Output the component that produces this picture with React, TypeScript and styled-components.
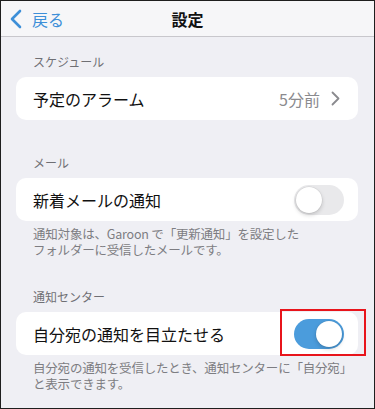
import React from "react";
import styled, { createGlobalStyle } from "styled-components";

const Global = createGlobalStyle`
  html, body { margin: 0; padding: 0; background: #ffffff; }
  * { box-sizing: border-box; }
`;

const FONT = `"Noto Sans CJK JP", "Noto Sans", "Liberation Sans", sans-serif`;

const Screen = styled.div`
  width: 375px;
  height: 409px;
  border: 1px solid #1e1e1e;
  background: #efeff4;
  font-family: ${FONT};
  overflow: hidden;
  display: flex;
  flex-direction: column;
`;

const NavBar = styled.header`
  height: 36px;
  flex: none;
  background: #f6f6f8;
  border-bottom: 1px solid #c8c7cc;
  display: grid;
  grid-template-columns: 1fr auto 1fr;
  align-items: center;
  padding: 0 8px;
`;

const BackButton = styled.div`
  display: flex;
  align-items: center;
  gap: 10px;
  color: #3d8fd8;
  font-size: 16px;
  line-height: 20px;
  padding-left: 1px;
`;

const Title = styled.div`
  font-size: 16px;
  font-weight: 700;
  color: #111;
  line-height: 20px;
  padding-top: 1px;
`;

const Content = styled.main`
  padding: 0 16px 0 15px;
  display: flex;
  flex-direction: column;
`;

const Section = styled.section<{ $top: number }>`
  margin-top: ${(p) => p.$top}px;
  display: flex;
  flex-direction: column;
`;

const SectionHeader = styled.div`
  font-size: 12px;
  line-height: 16px;
  color: #6f6f74;
  padding-left: 17px;
  margin-bottom: 7px;
`;

const Card = styled.div`
  position: relative;
  height: 43px;
  background: #ffffff;
  border-radius: 10px;
  display: flex;
  align-items: center;
  padding: 0 14px 0 17px;
`;

const RowLabel = styled.div`
  flex: 1;
  font-size: 16px;
  line-height: 20px;
  color: #111;
`;

const RowValue = styled.div`
  display: flex;
  align-items: center;
  gap: 11px;
  color: #8a8a8e;
  font-size: 16px;
  line-height: 20px;
  padding-right: 4px;
`;

const Footer = styled.div`
  font-size: 12.5px;
  letter-spacing: -0.2px;
  line-height: 16px;
  color: #7d7d82;
  padding: 5px 0 0 17px;
  white-space: nowrap;
`;

const FooterLine = styled.div`
  height: 16px;
`;

const Switch = styled.div<{ $on: boolean }>`
  position: relative;
  width: 50px;
  height: 30px;
  border-radius: 15px;
  background: ${(p) => (p.$on ? "#4b9cdc" : "#e9e9eb")};
  flex: none;
`;

const Knob = styled.div<{ $on: boolean }>`
  position: absolute;
  top: 2px;
  left: ${(p) => (p.$on ? "22px" : "2px")};
  width: 26px;
  height: 26px;
  border-radius: 50%;
  background: #ffffff;
  box-shadow: 0 2px 4px rgba(0, 0, 0, 0.18), 0 0 0 0.5px rgba(0, 0, 0, 0.08);
`;

const Highlight = styled.div`
  position: absolute;
  left: 264px;
  top: -3px;
  width: 86px;
  height: 47px;
  border: 2px solid #e8141b;
  pointer-events: none;
`;

const Toggle = ({ on }: { on: boolean }) => (
  <Switch $on={on}>
    <Knob $on={on} />
  </Switch>
);

export default function App() {
  return (
    <>
      <Global />
      <Screen>
        <NavBar>
          <BackButton>
            <svg width="12" height="20" viewBox="0 0 12 20">
              <polyline
                points="10,2 2,10 10,18"
                fill="none"
                stroke="#3d8fd8"
                strokeWidth="2.6"
                strokeLinecap="round"
                strokeLinejoin="round"
              />
            </svg>
            戻る
          </BackButton>
          <Title>設定</Title>
          <div />
        </NavBar>
        <Content>
          <Section $top={17}>
            <SectionHeader>スケジュール</SectionHeader>
            <Card>
              <RowLabel>予定のアラーム</RowLabel>
              <RowValue>
                5分前
                <svg width="9" height="15" viewBox="0 0 9 15">
                  <polyline
                    points="1.5,1.5 7.5,7.5 1.5,13.5"
                    fill="none"
                    stroke="#8a8a8e"
                    strokeWidth="1.8"
                    strokeLinecap="round"
                    strokeLinejoin="round"
                  />
                </svg>
              </RowValue>
            </Card>
          </Section>
          <Section $top={35}>
            <SectionHeader>メール</SectionHeader>
            <Card>
              <RowLabel>新着メールの通知</RowLabel>
              <Toggle on={false} />
            </Card>
            <Footer>
              <FooterLine>通知対象は、Garoon で「更新通知」を設定した</FooterLine>
              <FooterLine>フォルダーに受信したメールです。</FooterLine>
            </Footer>
          </Section>
          <Section $top={31}>
            <SectionHeader>通知センター</SectionHeader>
            <Card>
              <RowLabel>自分宛の通知を目立たせる</RowLabel>
              <Toggle on={true} />
              <Highlight />
            </Card>
            <Footer>
              <FooterLine>自分宛の通知を受信したとき、通知センターに「自分宛」</FooterLine>
              <FooterLine>と表示できます。</FooterLine>
            </Footer>
          </Section>
        </Content>
      </Screen>
    </>
  );
}
